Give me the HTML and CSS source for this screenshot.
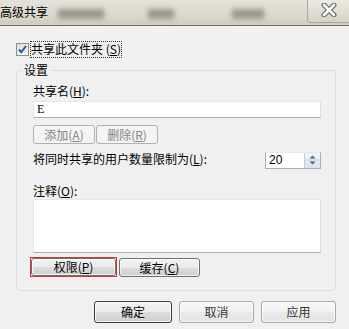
FILE: index.html
```html
<!DOCTYPE html>
<html lang="zh-CN">
<head>
  <meta charset="UTF-8">
  <title>高级共享</title>
  <link rel="stylesheet" href="styles.css">
</head>
<body>
  <div class="titlebar">
    <span class="title">高级共享</span>
    <span class="ghost ghost-1"></span>
    <span class="ghost ghost-2"></span>
    <span class="ghost ghost-3"></span>
    <span class="close">
      <svg width="16" height="14" viewBox="0 0 16 14">
        <path d="M3 2 L13 12 M13 2 L3 12" stroke="#6a6a66" stroke-width="5" stroke-linecap="round"/>
        <path d="M3 2 L13 12 M13 2 L3 12" stroke="#fff" stroke-width="2.6" stroke-linecap="round"/>
      </svg>
    </span>
  </div>

  <div class="dialog">
    <div class="share-row">
      <span class="checkbox">
        <svg width="11" height="11" viewBox="0 0 11 11"><path d="M2 5.5 L4.3 8.2 L9 2" fill="none" stroke="#2c58a8" stroke-width="2"/></svg>
      </span>
      <span class="focus-label">共享此文件夹 (<u>S</u>)</span>
    </div>

    <fieldset class="group">
      <legend>设置</legend>
      <div class="group-body">
        <div class="field-label">共享名(<u>H</u>):</div>
        <div class="text-input">E</div>

        <div class="btn-row">
          <span class="btn btn-small disabled">添加(<u>A</u>)</span>
          <span class="btn btn-small disabled">删除(<u>R</u>)</span>
        </div>

        <div class="limit-row">
          <span class="limit-text">将同时共享的用户数量限制为(<u>L</u>):</span>
          <span class="spin">
            <span class="spin-val">20</span>
            <span class="spin-btns">
              <svg width="15" height="14" viewBox="0 0 15 14">
                <path d="M4.5 5.5 L7.5 2.5 L10.5 5.5 Z" fill="#4d6185"/>
                <path d="M1 7 H14" stroke="#c6d2e0" stroke-width="1"/>
                <path d="M4.5 8.5 L7.5 11.5 L10.5 8.5 Z" fill="#4d6185"/>
              </svg>
            </span>
          </span>
        </div>

        <div class="field-label note-label">注释(<u>O</u>):</div>
        <div class="text-area"></div>

        <div class="btn-row perm-row">
          <span class="mark"><span class="btn btn-perm">权限(<u>P</u>)</span></span>
          <span class="btn btn-cache">缓存(<u>C</u>)</span>
        </div>
      </div>
    </fieldset>

    <div class="footer">
      <span class="btn btn-ok">确定</span>
      <span class="btn btn-foot faded">取消</span>
      <span class="btn btn-foot faded">应用</span>
    </div>
  </div>
</body>
</html>
```

FILE: styles.css
```css
* {margin:0; padding:0; box-sizing: border-box;}
body{
  width: 349px;
  height: 329px;
  overflow: hidden;
  background-color: #f0f0f0;
  color: #000;
  font: 12px/14px "Noto Sans CJK SC", "Liberation Sans", sans-serif;
}
u{text-decoration: underline; text-underline-offset: 1px;}

/* title bar */
.titlebar{
  position: relative;
  height: 26px;
  border-bottom: 1px solid #70706a;
  background: linear-gradient(#e4e2db, #d9d6cb 70%, #cfcbbd);
  display: flex;
  justify-content: space-between;
  overflow: hidden;
}
.title{
  padding-top: 5px;
  line-height: 14px;
}
.ghost{
  position: absolute;
  top: 9px;
  height: 10px;
  background: #7d7c75;
  filter: blur(2.5px);
  opacity: .7;
}
.ghost-1{left: 58px; width: 46px;}
.ghost-2{left: 148px; width: 26px;}
.ghost-3{left: 232px; width: 32px;}
.close{
  width: 44px;
  height: 23px;
  margin-right: -2px;
  border: 1px solid #a9a796;
  border-top: 0;
  border-radius: 0 0 0 4px;
  background: linear-gradient(#ecebe3, #d6d3c3);
  display: flex;
  justify-content: center;
  padding-top: 3px;
}

/* check row */
.share-row{
  display: flex;
  align-items: center;
  height: 17px;
  margin-top: 15px;
  padding-left: 16px;
}
.checkbox{
  width: 13px;
  height: 13px;
  border: 1px solid #8f8f8f;
  background: linear-gradient(135deg, #dcdcdc, #fbfbfb);
  display: flex;
}
.focus-label{
  margin-left: 1px;
  padding: 1px 1px 0;
  height: 17px;
  outline: 1px dotted #333;
  outline-offset: -1px;
}

/* group */
.group{
  margin: 5px 0 0 16px;
  width: 320px;
  border: 1px solid #d5dfe5;
  border-radius: 3px;
}
.group legend{
  margin-left: 5px;
  padding: 0 2px;
  line-height: 14px;
}
.group-body{
  padding: 7px 14px 13px 16px;
}
.field-label{
  height: 14px;
}
.text-input{
  margin-top: 3px;
  height: 17px;
  border: 1px solid #abadb3;
  border-top-color: #e3e9ef;
  border-left-color: #e2e3ea;
  border-right-color: #dbdfe6;
  background: #fff;
  padding-left: 3px;
  font: 12px/15px "Liberation Serif", serif;
}
.btn-row{
  display: flex;
  gap: 1px;
  margin-top: 7px;
}
.btn{
  display: flex;
  align-items: center;
  justify-content: center;
  border: 1px solid #707070;
  border-radius: 3px;
  background: linear-gradient(#f2f2f2, #ebebeb 50%, #dddddd 51%, #cfcfcf);
  box-shadow: inset 0 0 0 1px rgba(255,255,255,.7);
}
.btn-small{
  width: 62px;
  height: 19px;
}
.disabled{
  border-color: #adb2b5;
  background: #f4f4f4;
  color: #838383;
  box-shadow: none;
}
.limit-row{
  display: flex;
  justify-content: space-between;
  margin-top: 8px;
  height: 17px;
}
.limit-text{
  line-height: 14px;
}
.spin{
  display: flex;
  width: 56px;
  height: 17px;
  border: 1px solid #abadb3;
  border-top-color: #e3e9ef;
  background: #fff;
}
.spin-val{
  flex: 1;
  padding-left: 3px;
  font: 12px/15px "Liberation Sans", sans-serif;
}
.spin-btns{
  width: 16px;
  height: 15px;
  border-left: 1px solid #c6cdd6;
  background: linear-gradient(#f1f5fa, #d8e2ee);
  display: flex;
}
.note-label{
  margin-top: 15px;
}
.text-area{
  margin-top: 1px;
  height: 54px;
  border: 1px solid #abadb3;
  border-top-color: #e3e9ef;
  border-left-color: #e2e3ea;
  border-right-color: #dbdfe6;
  background: #fff;
}
.perm-row{
  margin-top: 4px;
  margin-left: -3px;
  gap: 2px;
  align-items: flex-start;
}
.mark{
  border: 1px solid #c8363a;
  padding: 0;
  display: flex;
}
.btn-perm{
  width: 85px;
  height: 18px;
}
.btn-cache{
  width: 81px;
  height: 19px;
  margin-top: 1px;
}

/* footer */
.footer{
  display: flex;
  justify-content: flex-end;
  gap: 7px;
  margin-top: 10px;
  padding-right: 13px;
}
.btn-ok{
  width: 78px;
  height: 22px;
  border-color: #3c3c3c;
}
.btn-foot{
  width: 75px;
  height: 22px;
}
.faded{
  border-color: #a8a8a8;
  background: linear-gradient(#f7f7f7, #f1f1f1 50%, #e9e9e9 51%, #e2e2e2);
  color: #333;
}
```
